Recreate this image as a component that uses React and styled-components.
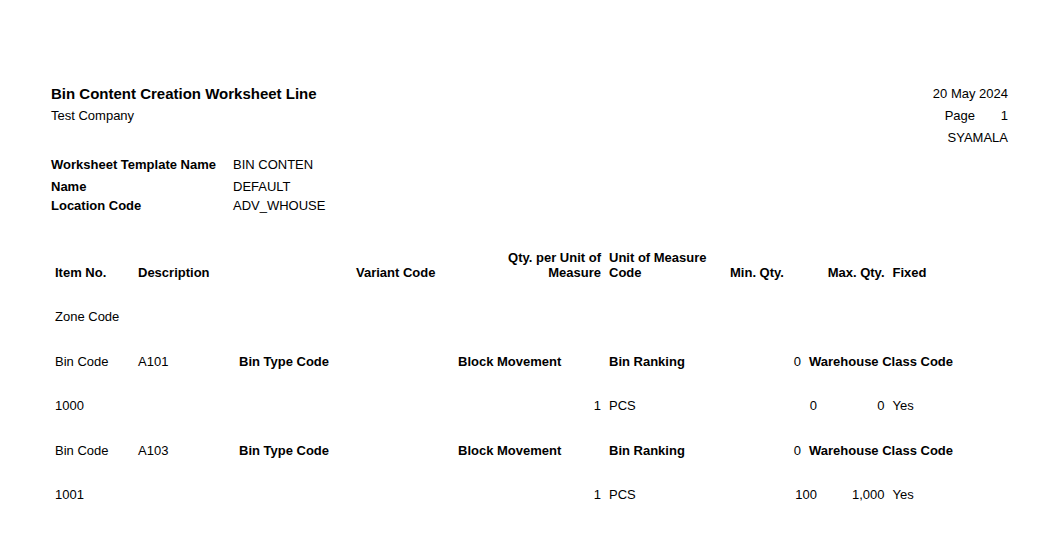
import React from 'react';
import styled, { createGlobalStyle } from 'styled-components';

const GlobalStyle = createGlobalStyle`
  html, body {
    margin: 0;
    padding: 0;
    background: #fff;
  }
  body {
    font-family: "Liberation Sans", Arial, sans-serif;
    font-size: 13px;
    color: #000;
  }
`;

const Page = styled.div`
  width: 1056px;
  box-sizing: border-box;
  padding: 83px 48px 0 51px;
`;

const ReportHeader = styled.div`
  display: flex;
  justify-content: space-between;
  align-items: flex-start;
`;

const TitleBlock = styled.div`
  line-height: 22px;
`;

const Title = styled.div`
  font-size: 15px;
  font-weight: bold;
`;

const Meta = styled.div`
  text-align: right;
  line-height: 22px;
`;

const MetaLine = styled.div`
  display: flex;
  justify-content: flex-end;
`;

const PageNo = styled.span`
  display: inline-block;
  width: 33px;
  text-align: right;
`;

const Fields = styled.div`
  margin-top: 6px;
  display: grid;
  grid-template-columns: 182px 1fr;
  line-height: 19px;
`;

const FieldLabel = styled.div`
  font-weight: bold;
  margin-top: ${p => p.$gap || 0}px;
`;

const FieldValue = styled.div`
  margin-top: ${p => p.$gap || 0}px;
`;

const itemCols = '83px 218px 128px 125px 121px 95px 67.5px 1fr';
const binCols = '83px 101px 219px 151px 121px 79px 1fr';

const Row = styled.div`
  display: grid;
  grid-template-columns: ${p => p.$cols};
  align-items: end;
  line-height: 15px;
  padding-top: ${p => p.$top}px;
`;

const Cell = styled.div`
  padding: 0 4px;
  text-align: ${p => (p.$right ? 'right' : 'left')};
  font-weight: ${p => (p.$bold ? 'bold' : 'normal')};
  white-space: nowrap;
`;

const headers = [
  { label: 'Item No.' },
  { label: 'Description' },
  { label: 'Variant Code' },
  { label: ['Qty. per Unit of', 'Measure'], right: true },
  { label: ['Unit of Measure', 'Code'] },
  { label: 'Min. Qty.' },
  { label: 'Max. Qty.', right: true },
  { label: 'Fixed' },
];

const lines = [
  { bin: 'A101', item: '1000', qty: '1', uom: 'PCS', min: '0', max: '0', fixed: 'Yes' },
  { bin: 'A103', item: '1001', qty: '1', uom: 'PCS', min: '100', max: '1,000', fixed: 'Yes' },
];

export default function App() {
  return (
    <>
      <GlobalStyle />
      <Page>
        <ReportHeader>
          <TitleBlock>
            <Title>Bin Content Creation Worksheet Line</Title>
            <div>Test Company</div>
          </TitleBlock>
          <Meta>
            <MetaLine>20 May 2024</MetaLine>
            <MetaLine>Page<PageNo>1</PageNo></MetaLine>
            <MetaLine>SYAMALA</MetaLine>
          </Meta>
        </ReportHeader>

        <Fields>
          <FieldLabel>Worksheet Template Name</FieldLabel>
          <FieldValue>BIN CONTEN</FieldValue>
          <FieldLabel $gap={3}>Name</FieldLabel>
          <FieldValue $gap={3}>DEFAULT</FieldValue>
          <FieldLabel>Location Code</FieldLabel>
          <FieldValue>ADV_WHOUSE</FieldValue>
        </Fields>

        <Row $cols={itemCols} $top={35}>
          {headers.map((h, i) => (
            <Cell key={i} $bold $right={h.right}>
              {Array.isArray(h.label) ? h.label.map(l => <div key={l}>{l}</div>) : h.label}
            </Cell>
          ))}
        </Row>

        <Row $cols={itemCols} $top={29}>
          <Cell>Zone Code</Cell>
        </Row>

        {lines.map(line => (
          <React.Fragment key={line.item}>
            <Row $cols={binCols} $top={29.5}>
              <Cell>Bin Code</Cell>
              <Cell>{line.bin}</Cell>
              <Cell $bold>Bin Type Code</Cell>
              <Cell $bold>Block Movement</Cell>
              <Cell $bold>Bin Ranking</Cell>
              <Cell $right>0</Cell>
              <Cell $bold>Warehouse Class Code</Cell>
            </Row>
            <Row $cols={itemCols} $top={29.5}>
              <Cell>{line.item}</Cell>
              <Cell />
              <Cell />
              <Cell $right>{line.qty}</Cell>
              <Cell>{line.uom}</Cell>
              <Cell $right>{line.min}</Cell>
              <Cell $right>{line.max}</Cell>
              <Cell>{line.fixed}</Cell>
            </Row>
          </React.Fragment>
        ))}
      </Page>
    </>
  );
}
